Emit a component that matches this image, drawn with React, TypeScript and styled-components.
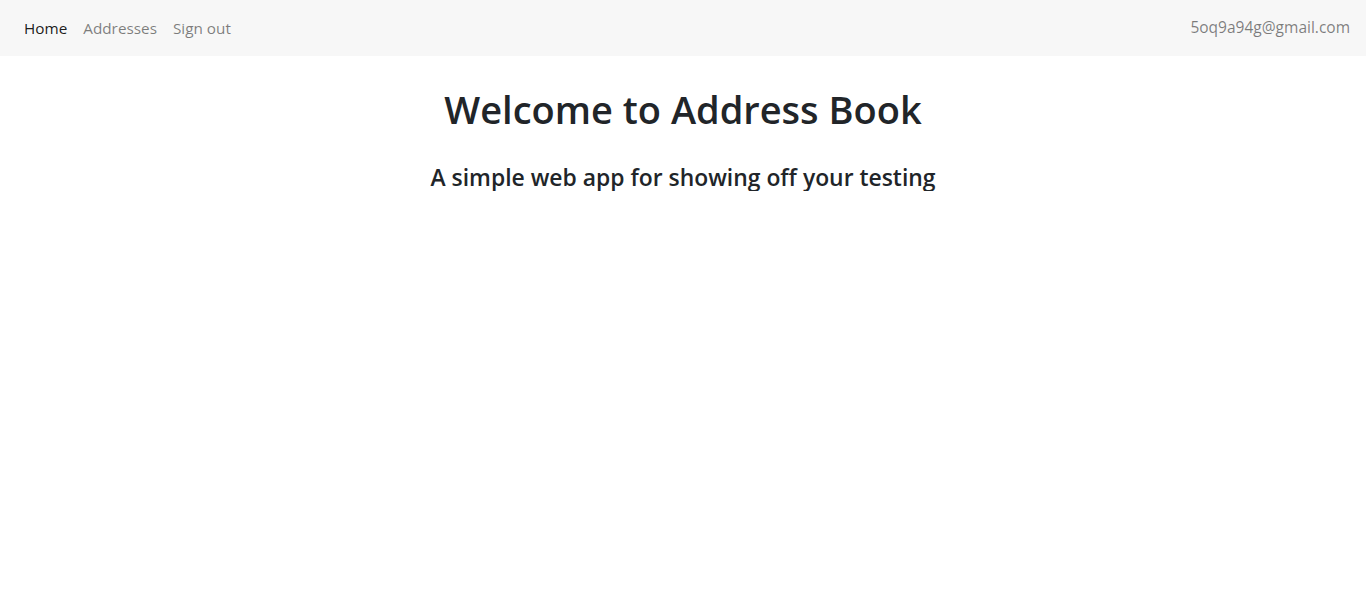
import React from "react";
import styled, { createGlobalStyle } from "styled-components";

const Global = createGlobalStyle`
  html, body { margin: 0; padding: 0; background: #fff; }
  body {
    font-family: "Open Sans", "Noto Sans", "Liberation Sans", sans-serif;
    font-size: 16px;
    line-height: 1.5;
    color: #212529;
  }
`;

const Navbar = styled.nav`
  display: flex;
  align-items: center;
  justify-content: space-between;
  height: 56px;
  padding: 0 16px;
  box-sizing: border-box;
  background: #f7f7f7;
`;

const NavList = styled.div`
  display: flex;
  align-items: center;
`;

const NavLink = styled.a<{ $active?: boolean }>`
  padding: 8px;
  font-size: 15.3px;
  text-decoration: none;
  color: ${(p) => (p.$active ? "rgba(0,0,0,0.9)" : "rgba(0,0,0,0.5)")};
  cursor: pointer;
`;

const UserEmail = styled.span`
  font-size: 15.5px;
  color: rgba(0,0,0,0.5);
`;

const Main = styled.main`
  display: flex;
  flex-direction: column;
  align-items: center;
  text-align: center;
  padding-top: 31px;
`;

const Title = styled.h1`
  margin: 0 0 31px;
  font-size: 38px;
  font-weight: 600;
  line-height: 1.2;
  color: #212529;
`;

const Subtitle = styled.h3`
  margin: 0;
  font-size: 22.9px;
  font-weight: 600;
  line-height: 1.2;
  color: #212529;
`;

export default function App() {
  return (
    <>
      <Global />
      <Navbar>
        <NavList>
          <NavLink $active>Home</NavLink>
          <NavLink>Addresses</NavLink>
          <NavLink>Sign out</NavLink>
        </NavList>
        <UserEmail>5oq9a94g@gmail.com</UserEmail>
      </Navbar>
      <Main>
        <Title>Welcome to Address Book</Title>
        <Subtitle>A simple web app for showing off your testing</Subtitle>
      </Main>
    </>
  );
}
